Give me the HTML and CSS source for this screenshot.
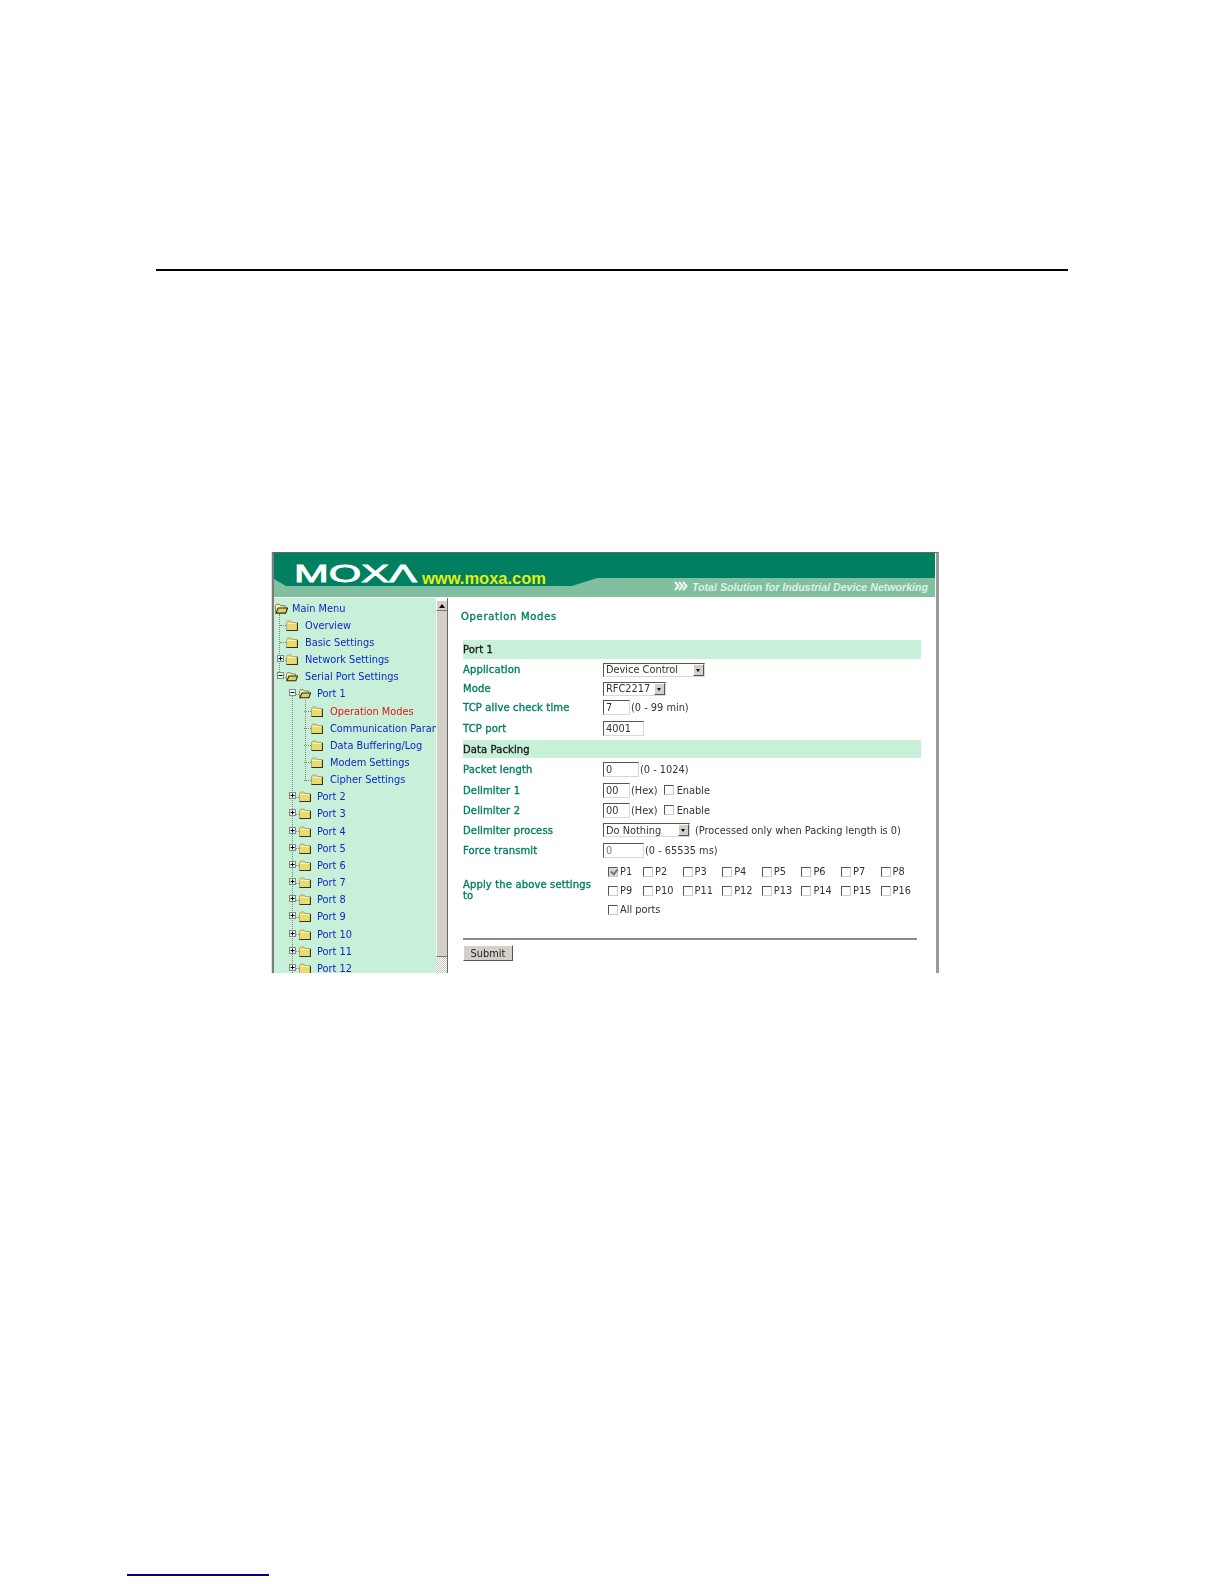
FILE: index.html
```html
<!DOCTYPE html>
<html lang="en">
<head>
<meta charset="utf-8">
<title>Operation Modes</title>
<link rel="stylesheet" href="styles.css">
</head>
<body>
<svg class="defs" width="0" height="0" aria-hidden="true">
  <symbol id="folder" viewBox="0 0 12 11">
    <path d="M0.500 2.500 L1.500 1 H5 L6 2.500 H11.500 V10.500 H0.500 Z" fill="#e9dc6c" stroke="#a8a880"/>
    <path d="M1.500 3.500 H10.500" stroke="#fbf4b0"/>
    <path d="M0.500 10.500 H11.500 V3" fill="none" stroke="#33332a" stroke-width="1.200"/>
  </symbol>
  <symbol id="folder-open" viewBox="0 0 14 11">
    <path d="M0.500 2.500 L1.500 1 H5 L6 2.500 H11 V9 H0.500 Z" fill="#f6f0b8" stroke="#77775a"/>
    <path d="M1 10.500 L3.500 5 H13.500 L11.500 10.500 Z" fill="#e0d258" stroke="#26261c" stroke-width="1.200"/>
  </symbol>
  <symbol id="plus" viewBox="0 0 7 7">
    <rect x="0.500" y="0.500" width="6" height="6" fill="#eef6ee" stroke="#808880"/>
    <path d="M1.500 3.500 H5.500 M3.500 1.500 V5.500" stroke="#000"/>
  </symbol>
  <symbol id="minus" viewBox="0 0 7 7">
    <rect x="0.500" y="0.500" width="6" height="6" fill="#eef6ee" stroke="#808880"/>
    <path d="M1.500 3.500 H5.500" stroke="#000"/>
  </symbol>
</svg>

<div class="rule"></div>

<section class="shot">
  <header class="banner">
    <svg class="banner-art" viewBox="0 0 661 45" width="661" height="45">
      <rect width="661" height="44" fill="#80c0a0"/>
      <path d="M0 0 H661 V25 H323 L298 33 H12 L0 26 Z" fill="#008060"/>
      <text class="logo" x="20" y="29" textLength="123" lengthAdjust="spacingAndGlyphs">MOXΛ</text>
      <text class="url" x="148" y="31" textLength="124" lengthAdjust="spacingAndGlyphs">www.moxa.com</text>
      <path d="M401 29 l3.500 4 l-3.500 4 M405 29 l3.500 4 l-3.500 4 M409 29 l3.500 4 l-3.500 4" fill="none" stroke="#f2faf6" stroke-width="2"/>
      <text class="tag" x="418" y="38" textLength="236" lengthAdjust="spacingAndGlyphs">Total Solution for Industrial Device Networking</text>
    </svg>
  </header>

  <div class="panes">
    <nav class="tree">
      <span class="guide g0"></span>
      <span class="guide g1"></span>
      <span class="guide g2"></span>
      <div class="row l0"><svg class="folder wide"><use href="#folder-open"/></svg><a>Main Menu</a></div>
      <div class="row l1"><span class="slot"></span><svg class="folder"><use href="#folder"/></svg><a>Overview</a></div>
      <div class="row l1"><span class="slot"></span><svg class="folder"><use href="#folder"/></svg><a>Basic Settings</a></div>
      <div class="row l1"><span class="slot"><svg class="exp"><use href="#plus"/></svg></span><svg class="folder"><use href="#folder"/></svg><a>Network Settings</a></div>
      <div class="row l1"><span class="slot"><svg class="exp"><use href="#minus"/></svg></span><svg class="folder"><use href="#folder-open"/></svg><a>Serial Port Settings</a></div>
      <div class="row l2"><span class="slot"><svg class="exp"><use href="#minus"/></svg></span><svg class="folder"><use href="#folder-open"/></svg><a>Port 1</a></div>
      <div class="row l3"><span class="slot"></span><svg class="folder"><use href="#folder"/></svg><a class="current">Operation Modes</a></div>
      <div class="row l3"><span class="slot"></span><svg class="folder"><use href="#folder"/></svg><a>Communication Param</a></div>
      <div class="row l3"><span class="slot"></span><svg class="folder"><use href="#folder"/></svg><a>Data Buffering/Log</a></div>
      <div class="row l3"><span class="slot"></span><svg class="folder"><use href="#folder"/></svg><a>Modem Settings</a></div>
      <div class="row l3"><span class="slot"></span><svg class="folder"><use href="#folder"/></svg><a>Cipher Settings</a></div>
      <div class="row l2"><span class="slot"><svg class="exp"><use href="#plus"/></svg></span><svg class="folder"><use href="#folder"/></svg><a>Port 2</a></div>
      <div class="row l2"><span class="slot"><svg class="exp"><use href="#plus"/></svg></span><svg class="folder"><use href="#folder"/></svg><a>Port 3</a></div>
      <div class="row l2"><span class="slot"><svg class="exp"><use href="#plus"/></svg></span><svg class="folder"><use href="#folder"/></svg><a>Port 4</a></div>
      <div class="row l2"><span class="slot"><svg class="exp"><use href="#plus"/></svg></span><svg class="folder"><use href="#folder"/></svg><a>Port 5</a></div>
      <div class="row l2"><span class="slot"><svg class="exp"><use href="#plus"/></svg></span><svg class="folder"><use href="#folder"/></svg><a>Port 6</a></div>
      <div class="row l2"><span class="slot"><svg class="exp"><use href="#plus"/></svg></span><svg class="folder"><use href="#folder"/></svg><a>Port 7</a></div>
      <div class="row l2"><span class="slot"><svg class="exp"><use href="#plus"/></svg></span><svg class="folder"><use href="#folder"/></svg><a>Port 8</a></div>
      <div class="row l2"><span class="slot"><svg class="exp"><use href="#plus"/></svg></span><svg class="folder"><use href="#folder"/></svg><a>Port 9</a></div>
      <div class="row l2"><span class="slot"><svg class="exp"><use href="#plus"/></svg></span><svg class="folder"><use href="#folder"/></svg><a>Port 10</a></div>
      <div class="row l2"><span class="slot"><svg class="exp"><use href="#plus"/></svg></span><svg class="folder"><use href="#folder"/></svg><a>Port 11</a></div>
      <div class="row l2"><span class="slot"><svg class="exp"><use href="#plus"/></svg></span><svg class="folder"><use href="#folder"/></svg><a>Port 12</a></div>
    </nav>

    <div class="scrollbar">
      <div class="sb-up"><span class="sb-arrow"></span></div>
      <div class="sb-thumb"></div>
      <div class="sb-track"></div>
    </div>

    <main class="content">
      <h1 class="title">Operation Modes</h1>

      <div class="band band-port">Port 1</div>
      <div class="field h21"><label>Application</label><div class="select w102"><span>Device Control</span><i></i></div></div>
      <div class="field h17"><label>Mode</label><div class="select w63"><span>RFC2217</span><i></i></div></div>
      <div class="field h21"><label>TCP alive check time</label><span class="input w27">7</span><span class="hint h1">(0 - 99 min)</span></div>
      <div class="field h20 after2"><label>TCP port</label><span class="input w41">4001</span></div>

      <div class="band band-data">Data Packing</div>
      <div class="field h21 before1"><label>Packet length</label><span class="input w36">0</span><span class="hint h1">(0 - 1024)</span></div>
      <div class="field h20"><label>Delimiter 1</label><span class="input w27">00</span><span class="hint h1">(Hex)</span><span class="check gap-en"></span><span class="hint h3">Enable</span></div>
      <div class="field h20"><label>Delimiter 2</label><span class="input w27">00</span><span class="hint h1">(Hex)</span><span class="check gap-en"></span><span class="hint h3">Enable</span></div>
      <div class="field h18 before1"><label>Delimiter process</label><div class="select w87"><span>Do Nothing</span><i></i></div><span class="hint h5">(Processed only when Packing length is 0)</span></div>
      <div class="field h20 before1"><label>Force transmit</label><span class="input w41 off">0</span><span class="hint h1">(0 - 65535 ms)</span></div>

      <div class="apply">
        <label>Apply the above settings to</label>
        <div class="ports">
          <span class="port"><span class="check on"></span>P1</span>
          <span class="port"><span class="check"></span>P2</span>
          <span class="port"><span class="check"></span>P3</span>
          <span class="port"><span class="check"></span>P4</span>
          <span class="port"><span class="check"></span>P5</span>
          <span class="port"><span class="check"></span>P6</span>
          <span class="port"><span class="check"></span>P7</span>
          <span class="port"><span class="check"></span>P8</span>
          <span class="port"><span class="check"></span>P9</span>
          <span class="port"><span class="check"></span>P10</span>
          <span class="port"><span class="check"></span>P11</span>
          <span class="port"><span class="check"></span>P12</span>
          <span class="port"><span class="check"></span>P13</span>
          <span class="port"><span class="check"></span>P14</span>
          <span class="port"><span class="check"></span>P15</span>
          <span class="port"><span class="check"></span>P16</span>
          <span class="port all"><span class="check"></span>All ports</span>
        </div>
      </div>

      <div class="divider"></div>
      <div class="submit">Submit</div>
    </main>
  </div>
</section>

<div class="footnote-rule"></div>
</body>
</html>
```
FILE: styles.css
```css
* { box-sizing: border-box; }

html, body { margin: 0; padding: 0; background: #fff; }

body { font-family: "DejaVu Sans", Verdana, sans-serif; font-size: 9.800px; }

.defs { position: absolute; }

.rule {
  width: 912px;
  height: 2px;
  margin: 269px 0 0 156px;
  background: #000;
}

.shot {
  width: 667px;
  height: 421px;
  margin: 281px 0 0 272px;
  border-top: 1px solid #5f6a66;
  border-left: 2px solid #7c7c7c;
  border-right: 3px solid #9a9a9a;
  box-shadow: -1px 0 0 #dedede;
  overflow: hidden;
  display: flex;
  flex-direction: column;
  filter: blur(0.35px);
}

.banner { height: 45px; flex: none; background: #fff; }
.banner-art { display: block; }
.logo { font: 24px "Liberation Sans", Arial, sans-serif; fill: #fff; stroke: #fff; stroke-width: 0.8px; }
.url { font: bold 16px "Liberation Sans", Arial, sans-serif; fill: #e4ee10; }
.tag { font: italic bold 10.500px "Liberation Sans", Arial, sans-serif; fill: #dff0e8; }

.panes { flex: 1; display: flex; min-height: 0; }

/* tree */
.tree {
  position: relative;
  width: 162px;
  flex: none;
  padding-top: 1.500px;
  background: #c8f0d8;
  overflow: hidden;
}

.guide { position: absolute; border-left: 1px dotted #7a8a80; width: 0; }
.g0 { left: 5px; top: 16px; height: 64px; }
.g1 { left: 18px; top: 96px; bottom: 0; }
.g2 { left: 31px; top: 102px; height: 81px; }

.row {
  position: relative;
  height: 17.160px;
  display: flex;
  align-items: center;
  white-space: nowrap;
}
.row a { color: #0a28c8; }
.row a.current { color: #e01818; }

.l0 { padding-left: 1px; }
.l0 a { margin-left: 4px; }
.l1 { padding-left: 3px; }
.l1 .slot { width: 9px; }
.l1 a { margin-left: 7px; }
.l2 { padding-left: 15px; }
.l2 .slot { width: 10px; }
.l2 a { margin-left: 6px; }
.l3 { padding-left: 27px; }
.l3 .slot { width: 10px; }
.l3 a { margin-left: 7px; }

.slot {
  position: relative;
  flex: none;
  height: 100%;
  display: flex;
  align-items: center;
}
.slot::before {
  content: "";
  position: absolute;
  left: 3px;
  right: 0;
  top: 50%;
  border-top: 1px dotted #7a8a80;
}
.exp { position: relative; width: 7px; height: 7px; display: block; margin-top: -2px; }
.folder { width: 12px; height: 11px; flex: none; }
.folder.wide { width: 13px; }

/* scrollbar */
.scrollbar {
  width: 12px;
  flex: none;
  display: flex;
  flex-direction: column;
  border-right: 1px solid #666;
  padding-top: 2px;
  background: #fff;
}
.sb-up {
  height: 11px;
  flex: none;
  background: #d4d0c8;
  border-top: 1px solid #fff;
  border-left: 1px solid #fff;
  border-bottom: 1px solid #777;
  display: flex;
  align-items: center;
  justify-content: center;
}
.sb-arrow {
  width: 0;
  height: 0;
  border-left: 3px solid transparent;
  border-right: 3px solid transparent;
  border-bottom: 4px solid #000;
}
.sb-thumb {
  flex: none;
  height: 346px;
  background: #d4d0c8;
  border-left: 1px solid #f4f4f0;
  border-bottom: 1px solid #777;
}
.sb-track {
  flex: 1;
  background: repeating-conic-gradient(#c8c8c4 0 25%, #fff 0 50%) 0 0 / 2px 2px;
}

/* form */
.content { flex: 1; padding: 0 15px 0 15px; color: #2a2a2a; min-width: 0; }

.title {
  margin: 12px 0 16px -2px;
  font-size: 10px;
  line-height: 14px;
  font-weight: normal;
  letter-spacing: 0.7px;
  -webkit-text-stroke: 0.35px #008060;
  color: #008060;
}

.band {
  background: #c8f0d8;
  font-size: 10px;
  letter-spacing: 0.1px;
  -webkit-text-stroke: 0.35px #1a1a1a;
  color: #1a1a1a;
  display: flex;
  align-items: center;
}
.band-port { height: 19px; }
.band-data { height: 18px; }

.field { display: flex; align-items: center; white-space: nowrap; }
.field label, .apply label {
  width: 140px;
  flex: none;
  font-size: 10px;
  letter-spacing: 0.14px;
  -webkit-text-stroke: 0.35px #008060;
  color: #008060;
}
.h17 { height: 17px; }
.h18 { height: 18px; }
.h20 { height: 20px; }
.h21 { height: 21px; }
.before1 { margin-top: 1px; }
.after2 { margin-bottom: 2px; }

.input, .select {
  display: flex;
  align-items: center;
  height: 15px;
  flex: none;
  background: #fff;
  border-style: solid;
  border-width: 1px;
  border-color: #555 #d8d8d4 #d8d8d4 #555;
  padding-left: 2px;
  color: #333;
}
.input.off { color: #777; }
.select { height: 14px; justify-content: space-between; padding-right: 0; }
.select i {
  position: relative;
  width: 11px;
  height: 12px;
  background: #d4d0c8;
  border-top: 1px solid #fff;
  border-left: 1px solid #fff;
  border-right: 1px solid #555;
  border-bottom: 1px solid #555;
}
.select i::after {
  content: "";
  position: absolute;
  left: 2px;
  top: 4px;
  border-left: 2.500px solid transparent;
  border-right: 2.500px solid transparent;
  border-top: 3px solid #000;
}
.w27 { width: 27px; }
.w36 { width: 36px; }
.w41 { width: 41px; }
.w63 { width: 63px; }
.w87 { width: 87px; }
.w102 { width: 102px; }

.hint { color: #333; }
.h1 { margin-left: 1px; }
.h3 { margin-left: 3px; }
.h5 { margin-left: 5px; }

.check {
  position: relative;
  display: block;
  width: 10px;
  height: 10px;
  flex: none;
  background: #fff;
  border-style: solid;
  border-width: 1px;
  border-color: #555 #ccc #ccc #555;
}
.gap-en { margin-left: 6px; }
.check.on { background: #d8d8d4; }
.check.on::after {
  content: "";
  position: absolute;
  left: 1px;
  top: 0;
  width: 5px;
  height: 3px;
  border-left: 2px solid #777;
  border-bottom: 2px solid #777;
  transform: rotate(-50deg) translate(0, 1px);
}

.apply { display: flex; align-items: center; margin-top: 2px; }
.apply label { line-height: 11px; padding-right: 6px; padding-bottom: 2px; }
.ports {
  display: grid;
  grid-template-columns: 35px repeat(7, 39.600px);
  grid-auto-rows: 19px;
  padding-left: 5px;
  color: #333;
}
.port { display: flex; align-items: center; gap: 2px; white-space: nowrap; }
.port.all { grid-column: 1 / -1; }

.divider { height: 2px; margin: 19px 4px 0 0; background: #8a8a8a; }

.submit {
  width: 50px;
  height: 16px;
  margin-top: 5px;
  display: flex;
  align-items: center;
  justify-content: center;
  background: #d4d0c8;
  border-style: solid;
  border-width: 1px;
  border-color: #fff #555 #555 #fff;
  color: #222;
}

.footnote-rule {
  width: 142px;
  height: 2px;
  margin: 601px 0 0 127px;
  background: #00007e;
}
```
